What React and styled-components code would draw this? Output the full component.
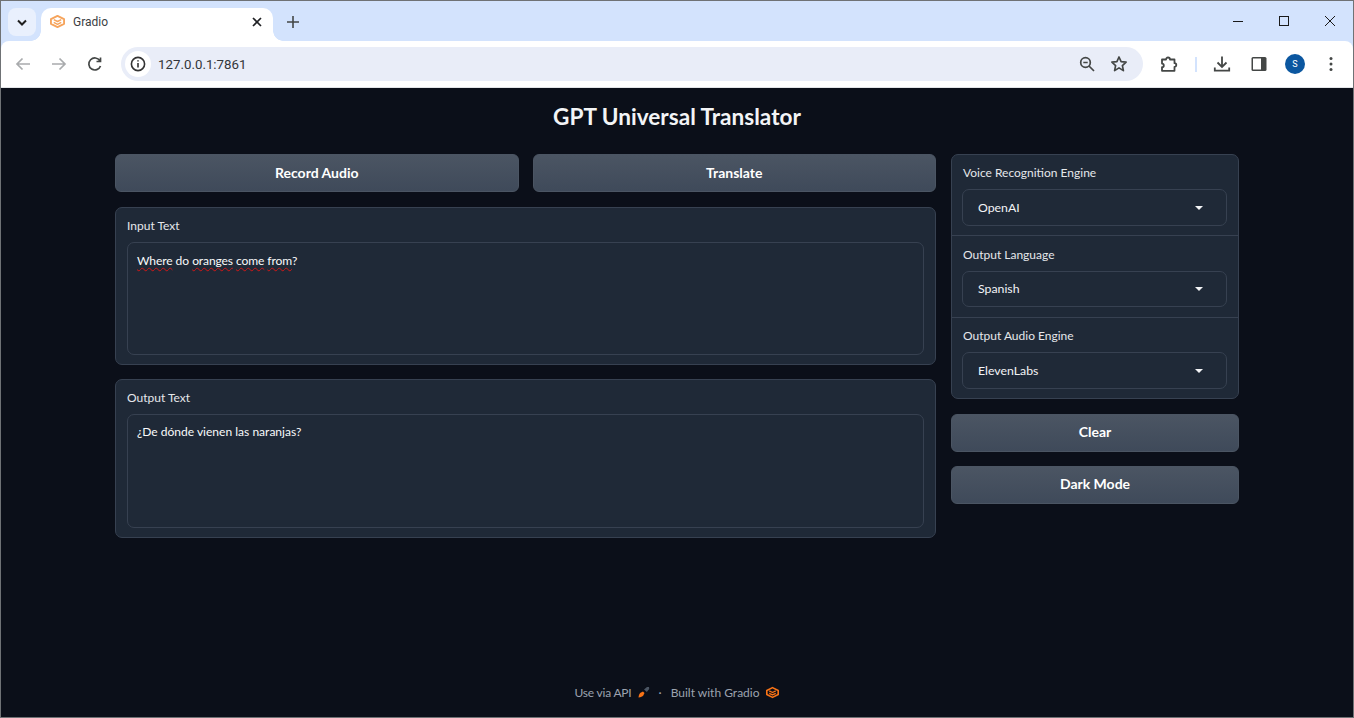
import React from "react";
import styled, { createGlobalStyle } from "styled-components";

const Global = createGlobalStyle`
  html, body { margin: 0; padding: 0; height: 100%; background: #0b0f19; }
  #root { height: 100%; }
  * { box-sizing: border-box; }
`;
const UI = `"Lato", "Noto Sans", sans-serif`;
const Win = styled.div`
  width: 1354px; height: 718px; display: flex; flex-direction: column;
  border: 1px solid #6f7275; overflow: hidden; background: #d3e3fd;
`;
const TabStrip = styled.div`
  height: 40px; flex: none; background: #d3e3fd; display: flex; align-items: flex-end; padding-left: 7px;
`;
const TabSearch = styled.div`
  width: 28px; height: 28px; border-radius: 8px; background: #e9f0fd; margin-right: 5px; margin-bottom: 5px;
  display: flex; align-items: center; justify-content: center;
`;
const Tab = styled.div`
  position: relative; width: 232px; height: 33px; background: #fff; border-radius: 10px 10px 0 0; display: flex; align-items: center;
  padding: 0 6px 6px 9px; font: 12px "Roboto", sans-serif; color: #3c4043; gap: 8px;
  &::before, &::after { content: ""; position: absolute; bottom: 0; width: 10px; height: 10px; }
  &::before { left: -10px; background: radial-gradient(circle at 0 0, transparent 9.5px, #fff 10px); }
  &::after { right: -10px; background: radial-gradient(circle at 100% 0, transparent 9.5px, #fff 10px); }
`;
const TabTitle = styled.span`flex: 1;`;
const NewTab = styled.div`
  width: 20px; height: 20px; margin: 0 0 9px 10px; display: flex; align-items: center; justify-content: center;
`;
const Spacer = styled.div`flex: 1;`;
const WinButtons = styled.div`
  display: flex; align-self: flex-start; height: 40px; align-items: center; gap: 26px; padding-right: 13px;
`;
const WinGlyph = styled.svg`width: 20px; height: 20px; display: block;`;
const Toolbar = styled.div`
  height: 47px; flex: none; background: #fff; border-radius: 8px 8px 0 0; display: flex; align-items: center;
  padding: 0 12px; border-bottom: 1px solid #e3e5e8;
`;
const NavIcon = styled.svg`width: 20px; height: 20px; display: block; flex: none;`;
const NavGap = styled.div`width: ${p => p.$w}px; flex: none;`;
const Omnibox = styled.div`
  width: 1022px; height: 34px; border-radius: 17px; background: #e9edf8; display: flex; align-items: center; padding: 0 14px 0 4px; flex: none;
  font: 13.3px "Roboto", sans-serif; color: #33363a;
`;
const InfoBadge = styled.div`
  width: 26px; height: 26px; border-radius: 50%; background: #fff; display: flex; align-items: center; justify-content: center; margin-right: 7px;
`;
const Divider = styled.div`width: 2px; height: 15px; background: #d3e3fd; flex: none;`;
const Avatar = styled.div`
  width: 20px; height: 20px; border-radius: 50%; background: #0b57a0; color: #fff; font: 9px "Roboto", sans-serif;
  display: flex; align-items: center; justify-content: center; flex: none;
`;
const Page = styled.main`
  flex: 1; background: #0b0f19; font-family: ${UI}; color: #f3f4f6; display: flex; flex-direction: column; align-items: center; min-height: 0;
`;
const Title = styled.h1`
  margin: 15px 0 0; font-size: 22.6px; line-height: 28px; font-weight: 700; color: #f3f4f6; height: 51px;
`;
const Columns = styled.div`width: 1124px; display: flex; gap: 15px; align-items: flex-start;`;
const Left = styled.div`width: 821px; display: flex; flex-direction: column; gap: 14px; flex: none;`;
const Right = styled.div`width: 288px; display: flex; flex-direction: column; gap: 14px; flex: none;`;
const ButtonRow = styled.div`display: flex; gap: 14px; margin-bottom: 1px;`;
const Btn = styled.button`
  flex: 1 0 38px; height: 38px; width: 100%; border: 1px solid #4b5563; border-radius: 6px;
  background: linear-gradient(to bottom, #4b5563, #3f4a5a); color: #fff; font: 700 14px/20px ${UI};
  padding: 0 0 ${p => (p.$raised ? 2 : 0)}px;
`;
const Card = styled.section`
  height: ${p => p.$h}px; background: #1f2937; border: 1px solid #374151; border-radius: 7px; padding: 10px 11px 9px; display: flex; flex-direction: column;
`;
const FieldLabel = styled.div`font-size: 12px; line-height: 16px; color: #e5e7eb; margin-bottom: 8px;`;
const PanelLabel = styled(FieldLabel)`margin-left: 1px;`;
const TextBox = styled.div`
  flex: 1; border: 1px solid #374151; border-radius: 7px; padding: ${p => p.$top}px 9px 0; font-size: 12.05px; line-height: 16px; color: #f9fafb;
`;
const Misspelled = styled.span`text-decoration: underline wavy #d01616 1px; text-underline-offset: 2px; letter-spacing: -0.12px;`;
const Panel = styled.section`
  height: 245px; background: #1f2937; border: 1px solid #374151; border-radius: 7px; display: flex; flex-direction: column; overflow: hidden; margin-bottom: 1px;
`;
const Group = styled.div`
  flex: 1; padding: ${p => p.$top}px 11px 0 10px; & + & { border-top: 1px solid #374151; }
`;
const Select = styled.div`
  height: ${p => p.$h}px; border: 1px solid #374151; border-radius: 7px; display: flex; align-items: center; justify-content: space-between;
  padding: 0 23px ${p => (p.$h === 36 ? 1 : 0)}px 15px; font-size: 12.3px; color: #f3f4f6;
`;
const Caret = styled.span`
  width: 0; height: 0; border-left: 4px solid transparent; border-right: 4px solid transparent; border-top: 4px solid #f3f4f6;
`;
const Footer = styled.footer`
  margin-top: auto; height: 50px; display: flex; align-items: center; justify-content: center; gap: 5px; font-size: 12px; color: #9ca3af; padding-right: 1px;
`;
const FootDot = styled.span`margin: 0 4px;`;
const FootLink = styled.span`display: inline-flex; align-items: center; gap: 6px;`;
const ApiLink = styled(FootLink)`letter-spacing: -0.2px;`;

const Logo = ({ size = 14, c = "#f97316" }) => (
  <svg width={size} height={size} viewBox="0 0 16 16" fill="none" stroke={c} strokeWidth="2" strokeLinejoin="round">
    <path d="M8 2 15 5.500v5L8 14 1 10.500v-5Z" />
    <path d="M4 6 8 8 12 6M4 9 8 11 12 9" strokeWidth="1.600" />
  </svg>
);

const Field = ({ label, value, top = 10, h = 37 }) => (
  <Group $top={top}>
    <PanelLabel>{label}</PanelLabel>
    <Select $h={h}>{value}<Caret /></Select>
  </Group>
);

export default function App() {
  return (
    <Win>
      <Global />
      <TabStrip>
        <TabSearch>
          <NavIcon viewBox="0 0 20 20" fill="none" stroke="#1f1f1f" strokeWidth="2"><path d="M6 8.500l4 4 4-4" /></NavIcon>
        </TabSearch>
        <Tab>
          <Logo size={15} c="#f6a45c" />
          <TabTitle>Gradio</TabTitle>
          <NavIcon viewBox="0 0 20 20" fill="none" stroke="#202124" strokeWidth="1.700"><path d="M6 6l8 8M14 6l-8 8" /></NavIcon>
        </Tab>
        <NewTab>
          <NavIcon viewBox="0 0 20 20" fill="none" stroke="#444746" strokeWidth="1.600"><path d="M10 4v12M4 10h12" /></NavIcon>
        </NewTab>
        <Spacer />
        <WinButtons>
          <WinGlyph viewBox="0 0 20 20" fill="none" stroke="#1a1a1a"><path d="M5 10.500h10" /></WinGlyph>
          <WinGlyph viewBox="0 0 20 20" fill="none" stroke="#1a1a1a"><rect x="5.500" y="5.500" width="9" height="9" /></WinGlyph>
          <WinGlyph viewBox="0 0 20 20" fill="none" stroke="#1a1a1a"><path d="M5 5l10 10M15 5 5 15" /></WinGlyph>
        </WinButtons>
      </TabStrip>
      <Toolbar>
        <NavIcon viewBox="0 0 20 20" fill="none" stroke="#a9abad" strokeWidth="1.700"><path d="M17 10H4M9.500 4.500 4 10l5.500 5.500" /></NavIcon>
        <NavGap $w={16} />
        <NavIcon viewBox="0 0 20 20" fill="none" stroke="#a9abad" strokeWidth="1.700"><path d="M3 10h13M10.500 4.500 16 10l-5.500 5.500" /></NavIcon>
        <NavGap $w={16} />
        <NavIcon viewBox="0 0 20 20" fill="none" stroke="#444746" strokeWidth="1.700"><path d="M15.500 12a6 6 0 1 1-.6-5.300M15.500 3.500v4h-4" /></NavIcon>
        <NavGap $w={16} />
        <Omnibox>
          <InfoBadge>
            <NavIcon viewBox="0 0 20 20" fill="none" stroke="#333" strokeWidth="1.600"><circle cx="10" cy="10" r="6.600" /><path d="M10 9v4.500M10 6.200v1.400" /></NavIcon>
          </InfoBadge>
          127.0.0.1:7861
          <Spacer />
          <NavIcon viewBox="0 0 20 20" fill="none" stroke="#444746" strokeWidth="1.700"><circle cx="8.500" cy="8.500" r="4.800" /><path d="M12 12l5 5M6.300 8.500h4.400" /></NavIcon>
          <NavGap $w={12} />
          <NavIcon viewBox="0 0 20 20" fill="none" stroke="#444746" strokeWidth="1.700" strokeLinejoin="round"><path d="M10 3l2.100 4.600 5 .6-3.700 3.400 1 5L10 13.900l-4.400 2.700 1-5L2.900 8.200l5-.6Z" /></NavIcon>
        </Omnibox>
        <NavGap $w={16} />
        <NavIcon viewBox="0 0 20 20" fill="none" stroke="#444746" strokeWidth="1.800" strokeLinejoin="round"><path d="M3 5.500h4a2 2 0 0 1 4 0h4.500v3.700a1.800 1.800 0 0 1 0 3.600v4H3v-3.600a1.800 1.800 0 0 0 0-3.600Z" /></NavIcon>
        <NavGap $w={16} />
        <Divider />
        <NavGap $w={15} />
        <NavIcon viewBox="0 0 20 20" fill="none" stroke="#444746" strokeWidth="1.800"><path d="M10 2.500v10M5.500 8.500 10 13l4.500-4.500M2.800 13.500v3.200h14.400v-3.200" /></NavIcon>
        <NavGap $w={17} />
        <NavIcon viewBox="0 0 20 20"><rect x="2.500" y="3" width="15" height="14" rx="1.500" fill="#444746" /><rect x="4" y="4.500" width="8" height="11" fill="#fff" /></NavIcon>
        <NavGap $w={16} />
        <Avatar>S</Avatar>
        <NavGap $w={16} />
        <NavIcon viewBox="0 0 20 20" fill="#444746"><circle cx="10" cy="4.500" r="1.500" /><circle cx="10" cy="10" r="1.500" /><circle cx="10" cy="15.500" r="1.500" /></NavIcon>
      </Toolbar>
      <Page>
        <Title>GPT Universal Translator</Title>
        <Columns>
          <Left>
            <ButtonRow>
              <Btn>Record Audio</Btn>
              <Btn>Translate</Btn>
            </ButtonRow>
            <Card $h={158}>
              <FieldLabel>Input Text</FieldLabel>
              <TextBox $top={10}>
                <Misspelled>Where</Misspelled> do <Misspelled>oranges</Misspelled> <Misspelled>come</Misspelled> <Misspelled>from</Misspelled>?
              </TextBox>
            </Card>
            <Card $h={159}>
              <FieldLabel>Output Text</FieldLabel>
              <TextBox $top={9}>¿De dónde vienen las naranjas?</TextBox>
            </Card>
          </Left>
          <Right>
            <Panel>
              <Field label="Voice Recognition Engine" value="OpenAI" />
              <Field label="Output Language" value="Spanish" top={11} h={36} />
              <Field label="Output Audio Engine" value="ElevenLabs" />
            </Panel>
            <Btn $raised>Clear</Btn>
            <Btn $raised>Dark Mode</Btn>
          </Right>
        </Columns>
        <Footer>
          <ApiLink>Use via API
            <svg width="12" height="12" viewBox="0 0 12 12"><path d="M0.500 11.500c.2-2.500 1-3.800 2-4.800l2.500-1.200 1.500 1.500-1.200 2.500c-1 1-2.300 1.800-4.800 2Z" fill="#f97316" /><path d="M6 3.500 9 1l2 .1.200 2-2.400 3Z" fill="#4b5563" /></svg>
          </ApiLink>
          <FootDot>·</FootDot>
          <FootLink>Built with Gradio <Logo size={13} /></FootLink>
        </Footer>
      </Page>
    </Win>
  );
}
